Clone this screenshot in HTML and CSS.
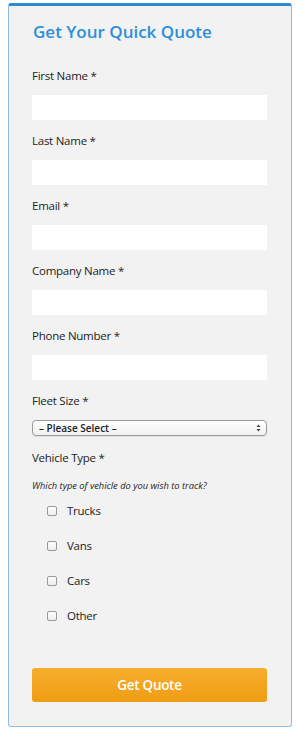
FILE: index.html
```html
<!DOCTYPE html>
<html>
<head>
<meta charset="utf-8">
<link rel="stylesheet" href="styles.css">
</head>
<body>
<form class="card">
  <h2 class="title">Get Your Quick Quote</h2>
  <div class="field"><label class="lbl">First Name *</label><input class="txt" type="text"></div>
  <div class="field"><label class="lbl">Last Name *</label><input class="txt" type="text"></div>
  <div class="field"><label class="lbl">Email *</label><input class="txt" type="text"></div>
  <div class="field"><label class="lbl">Company Name *</label><input class="txt" type="text"></div>
  <div class="field"><label class="lbl">Phone Number *</label><input class="txt" type="text"></div>
  <div class="field"><label class="lbl">Fleet Size *</label>
    <div class="select"><span>– Please Select –</span>
      <svg class="updown" width="5" height="8" viewBox="0 0 5 8"><path d="M0.5 3 L2.5 0.5 L4.5 3 Z M0.5 5 L2.5 7.5 L4.5 5 Z" fill="#444"/></svg>
    </div>
  </div>
  <div class="field vt"><label class="lbl">Vehicle Type *</label>
    <p class="help">Which type of vehicle do you wish to track?</p>
    <ul class="checks">
      <li><span class="box"></span>Trucks</li>
      <li><span class="box"></span>Vans</li>
      <li><span class="box"></span>Cars</li>
      <li><span class="box"></span>Other</li>
    </ul>
  </div>
  <button class="btn" type="button">Get Quote</button>
</form>
</body>
</html>
```
FILE: styles.css
```css
* { box-sizing: border-box; }
body {
  margin: 0;
  background: #fff;
  font-family: "Open Sans", "DejaVu Sans", sans-serif;
  color: #222;
}
.card {
  margin: 3px 8px 0 8px;
  width: 284px;
  height: 724px;
  background: #f2f2f2;
  border: 1px solid #8dbde6;
  border-top: 3px solid #2f8ad6;
  border-radius: 3px;
  padding: 14px 23px 0 23px;
}
.title {
  margin: 0 0 23px 1px;
  font-size: 17px;
  line-height: 24px;
  font-weight: 600;
  color: #2e8fd9;
}
.field { margin-bottom: 12px; }
.lbl {
  display: block;
  font-size: 11.5px;
  letter-spacing: -0.25px;
  line-height: 18px;
  margin-bottom: 10px;
  color: #222;
}
.txt {
  display: block;
  width: 235px;
  height: 25px;
  border: none;
  background: #fff;
  margin: 0;
  padding: 0 6px;
}
.select {
  width: 235px;
  height: 16px;
  border: 1px solid #9a9a9a;
  border-radius: 4px;
  background: linear-gradient(#ffffff, #f0f0f0);
  display: flex;
  align-items: center;
  justify-content: space-between;
  padding: 0 5px 0 6px;
  font-size: 10px;
  font-weight: 600;
  color: #222;
  box-shadow: 0 1px 1px rgba(0,0,0,0.08);
}
.updown { display: block; }
.vt { margin-bottom: 0; }
.vt .lbl { margin-top: 13px; margin-bottom: 0; }
.help {
  margin: 12px 0 0 0;
  font-size: 9.3px;
  font-style: italic;
  line-height: 14px;
  color: #222;
}
.checks {
  list-style: none;
  margin: 0;
  padding: 0;
}
.checks li {
  display: flex;
  align-items: center;
  height: 35px;
  font-size: 11.5px;
  letter-spacing: -0.25px;
  padding-left: 15px;
}
.box {
  width: 10px;
  height: 10px;
  border: 1px solid #999;
  border-radius: 2px;
  background: linear-gradient(#fff, #ececec);
  margin-right: 10px;
}
.btn {
  display: block;
  margin-top: 35px;
  width: 235px;
  height: 34px;
  border: none;
  border-radius: 3px;
  background: linear-gradient(#f7ae2c, #f09c14);
  color: #fff;
  font-family: "Open Sans", sans-serif;
  font-size: 13.5px;
  letter-spacing: -0.3px;
  font-weight: 600;
  padding: 0;
}
```
